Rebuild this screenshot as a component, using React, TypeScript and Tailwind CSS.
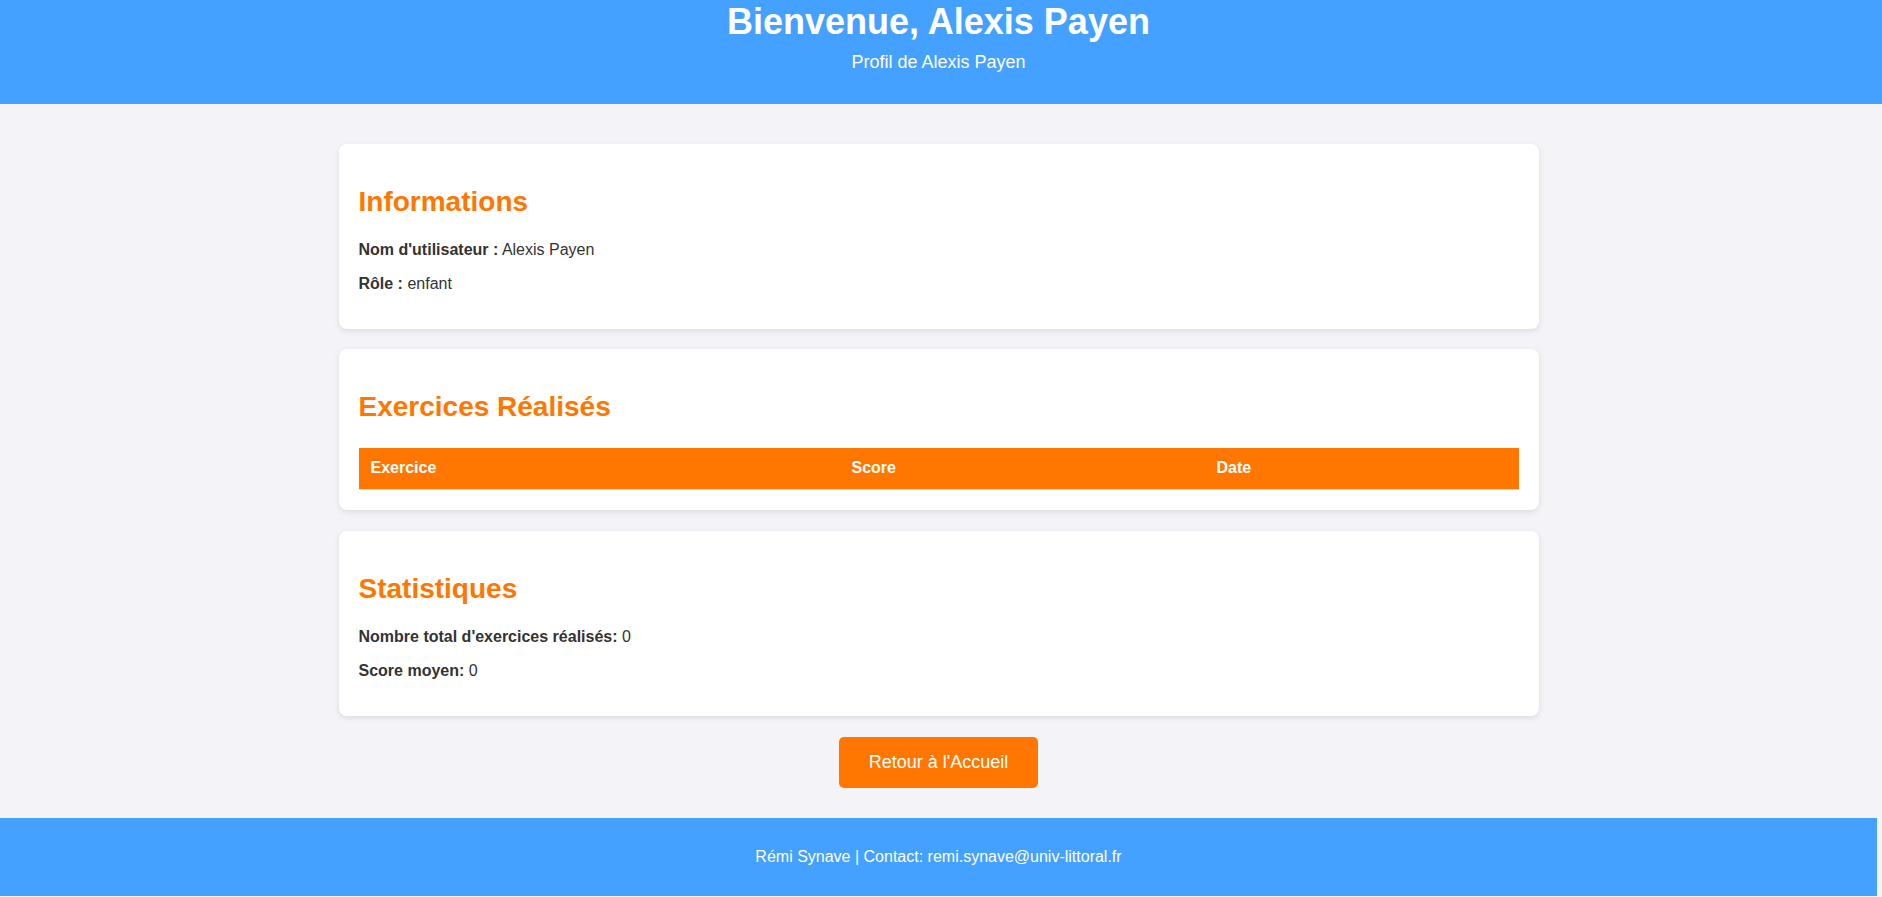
export default function App() {
  return (
    <div className="min-h-screen bg-[#f4f4f8] font-['Liberation_Sans',Arial,sans-serif] text-[#333]">
      {/* Header */}
      <header className="h-[104px] bg-[#45a1ff] text-white">
        <div className="w-[1877px] text-center">
          <h1 className="pt-px text-[36px] font-bold leading-[41px]">Bienvenue, Alexis Payen</h1>
          <p className="mt-[10px] text-[18px] leading-[21px]">Profil de Alexis Payen</p>
        </div>
      </header>

      <div className="w-[1877px]">
        <main className="flex flex-col items-center pt-[40px]">
          {/* Informations */}
          <section className="w-[1200px] rounded-lg bg-white px-5 pt-[42px] pb-[36px] shadow-[0_2px_6px_rgba(0,0,0,0.1)]">
            <h2 className="text-[28px] font-bold leading-[32px] text-[#ff7700]">Informations</h2>
            <p className="mt-[23px] text-[16px] leading-[18px]">
              <strong>Nom d'utilisateur :</strong> Alexis Payen
            </p>
            <p className="mt-4 text-[16px] leading-[18px]">
              <strong>Rôle :</strong> enfant
            </p>
          </section>

          {/* Exercices */}
          <section className="mt-[20px] w-[1200px] rounded-lg bg-white px-5 pt-[42px] pb-5 shadow-[0_2px_6px_rgba(0,0,0,0.1)]">
            <h2 className="text-[28px] font-bold leading-[32px] text-[#ff7700]">Exercices Réalisés</h2>
            <table className="mt-[25px] w-full border-collapse text-left">
              <thead>
                <tr className="border-b border-[#ddd] bg-[#ff7700] text-white">
                  <th className="h-[41px] w-[481px] px-3 text-[16px] font-bold">Exercice</th>
                  <th className="h-[41px] w-[365px] px-3 text-[16px] font-bold">Score</th>
                  <th className="h-[41px] px-3 text-[16px] font-bold">Date</th>
                </tr>
              </thead>
              <tbody></tbody>
            </table>
          </section>

          {/* Statistiques */}
          <section className="mt-[21px] w-[1200px] rounded-lg bg-white px-5 pt-[42px] pb-[36px] shadow-[0_2px_6px_rgba(0,0,0,0.1)]">
            <h2 className="text-[28px] font-bold leading-[32px] text-[#ff7700]">Statistiques</h2>
            <p className="mt-[23px] text-[16px] leading-[18px]">
              <strong>Nombre total d'exercices réalisés:</strong> 0
            </p>
            <p className="mt-4 text-[16px] leading-[18px]">
              <strong>Score moyen:</strong> 0
            </p>
          </section>

          <a
            href="#"
            className="mt-[21px] rounded-[5px] bg-[#ff7700] px-[30px] py-[15px] text-[18px] leading-[21px] text-white"
          >
            Retour à l'Accueil
          </a>
        </main>

        {/* Footer */}
        <footer className="mt-[30px] bg-[#45a1ff] py-[30px] text-center text-[16px] leading-[18px] text-white">
          Rémi Synave | Contact: remi.synave@univ-littoral.fr
        </footer>
      </div>
    </div>
  );
}
